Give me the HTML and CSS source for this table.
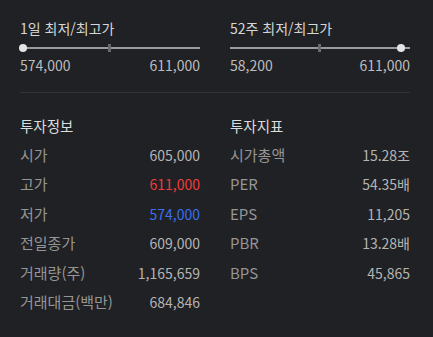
FILE: index.html
```html
<!DOCTYPE html>
<html lang="ko">
<head>
<meta charset="utf-8">
<link rel="stylesheet" href="styles.css">
</head>
<body>
<div class="panel">
  <div class="ranges">
    <div class="range">
      <div class="range-title">1일 최저/최고가</div>
      <div class="slider">
        <span class="track"></span>
        <span class="mid"></span>
        <span class="dot" style="left:0%"></span>
      </div>
      <div class="range-values"><span>574,000</span><span>611,000</span></div>
    </div>
    <div class="range">
      <div class="range-title">52주 최저/최고가</div>
      <div class="slider">
        <span class="track"></span>
        <span class="mid"></span>
        <span class="dot" style="left:100%"></span>
      </div>
      <div class="range-values"><span>58,200</span><span>611,000</span></div>
    </div>
  </div>
  <div class="divider"></div>
  <div class="tables">
    <div class="table">
      <div class="table-title">투자정보</div>
      <div class="rows">
        <div class="row"><span class="label">시가</span><span class="value">605,000</span></div>
        <div class="row"><span class="label">고가</span><span class="value up">611,000</span></div>
        <div class="row"><span class="label">저가</span><span class="value down">574,000</span></div>
        <div class="row"><span class="label">전일종가</span><span class="value">609,000</span></div>
        <div class="row"><span class="label">거래량(주)</span><span class="value">1,165,659</span></div>
        <div class="row"><span class="label">거래대금(백만)</span><span class="value">684,846</span></div>
      </div>
    </div>
    <div class="table">
      <div class="table-title">투자지표</div>
      <div class="rows">
        <div class="row"><span class="label">시가총액</span><span class="value">15.28조</span></div>
        <div class="row"><span class="label">PER</span><span class="value">54.35배</span></div>
        <div class="row"><span class="label">EPS</span><span class="value">11,205</span></div>
        <div class="row"><span class="label">PBR</span><span class="value">13.28배</span></div>
        <div class="row"><span class="label">BPS</span><span class="value">45,865</span></div>
      </div>
    </div>
  </div>
</div>
</body>
</html>
```
FILE: styles.css
```css
html, body {
  margin: 0;
  padding: 0;
  background: #202124;
  width: 433px;
  height: 337px;
  overflow: hidden;
}
body {
  font-family: "Noto Sans CJK KR", "Noto Sans", sans-serif;
  font-size: 15px;
  color: #b4b4b4;
}
.panel {
  padding: 18px 23px 0 20px;
}
.ranges {
  display: grid;
  grid-template-columns: 180px 180px;
  column-gap: 30px;
}
.range-title {
  line-height: 20px;
  font-size: 14px;
  color: #d6d6d6;
}
.slider {
  position: relative;
  height: 8px;
  margin-top: 6px;
}
.track {
  position: absolute;
  left: 0;
  right: 0;
  top: 3px;
  height: 2px;
  background: #9b9b9b;
}
.mid {
  position: absolute;
  left: 88px;
  top: 0;
  width: 3px;
  height: 8px;
  background: #6a6a6a;
}
.dot {
  position: absolute;
  top: 0;
  width: 8px;
  height: 8px;
  margin-left: -5px;
  border-radius: 50%;
  background: #e4e4e4;
}
.range:first-child .dot { margin-left: -1px; }
.range:last-child .dot { margin-left: -13px; }
.range-values {
  display: flex;
  justify-content: space-between;
  margin-top: 4px;
  line-height: 18px;
  font-size: 14px;
  color: #bdbdbd;
}
.divider {
  height: 1px;
  background: #323336;
  margin-top: 18px;
}
.tables {
  display: grid;
  grid-template-columns: 180px 180px;
  column-gap: 30px;
  margin-top: 23px;
}
.table-title {
  line-height: 20px;
  font-size: 14.5px;
  color: #dcdcdc;
}
.rows {
  margin-top: 4px;
}
.row {
  display: flex;
  justify-content: space-between;
  align-items: baseline;
  line-height: 29.4px;
  height: 29.4px;
}
.label { color: #959595; }
.value { color: #b4b4b4; font-size: 14px; }
.value.up { color: #f23b3b; }
.value.down { color: #3b6ef0; }
```
